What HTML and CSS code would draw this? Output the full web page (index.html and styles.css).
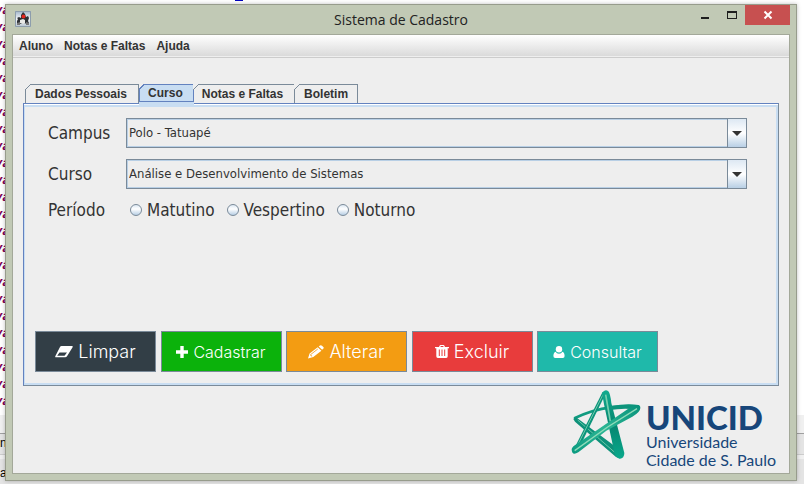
FILE: index.html
```html
<!DOCTYPE html>
<html lang="pt-BR">
<head>
<meta charset="utf-8">
<title>Sistema de Cadastro</title>
<link rel="stylesheet" href="styles.css">
</head>
<body>
<div class="backdrop" aria-hidden="true">
  <div class="editor">
    <div class="caret"></div>
    <div class="code">va<br>va<br>va<br>va<br>va<br>va<br>va<br>va<br>va<br>va<br>va<br>va<br>va<br>va<br>va<br>va<br>va<br>va<br>va<br>va<br>va<br>va<br>va<br>va</div>
  </div>
  <div class="strip"></div>
  <div class="strip-tabs">n</div>
  <div class="console">a</div>
</div>
<main class="window">
  <header class="titlebar">
    <svg class="app-icon" viewBox="0 0 16 16" width="16" height="16">
      <defs><linearGradient id="ic" x2="0" y2="1"><stop stop-color="#9fb3c8"/><stop offset=".5" stop-color="#f4f7fa"/><stop offset="1" stop-color="#b4c2cf"/></linearGradient></defs>
      <rect width="16" height="16" fill="url(#ic)"/>
      <path d="M.5.5h15v15H.5z" fill="none" stroke="#8d9dac"/>
      <path d="M8 1l2 2 1 3 2-1 1 2-1 3 1 2-2 1-3-1-4 1-3-1v-2l1-2-1-1 2-1 2 1 0-3z" fill="#2d3035"/>
      <path d="M5 9l3-1 2 1v3l-2 1-3-1z" fill="#e8e8e6"/>
      <path d="M2 12l3-1v3H2zM11 11l3 1v2h-3z" fill="#777"/>
      <circle cx="8.500" cy="5.500" r="2" fill="#e3241c"/>
    </svg>
    <h1>Sistema de Cadastro</h1>
    <div class="controls">
      <button type="button" aria-label="Minimizar"><svg width="10" height="10" viewBox="0 0 10 10"><path d="M1 7h8v2H1z" fill="#1e1e1e"/></svg></button>
      <button type="button" aria-label="Maximizar"><svg width="10" height="10" viewBox="0 0 10 10"><path d="M0 1h10v8H0zM1 3v5h8V3z" fill="#1e1e1e" fill-rule="evenodd"/></svg></button>
      <button type="button" class="close" aria-label="Fechar"><svg width="10" height="10" viewBox="0 0 10 10"><path d="M1.500 1.500l7 7M8.500 1.500l-7 7" stroke="#fff" stroke-width="2"/></svg></button>
    </div>
  </header>
  <div class="client">
    <nav class="menubar">
      <button type="button">Aluno</button>
      <button type="button">Notas e Faltas</button>
      <button type="button">Ajuda</button>
    </nav>
    <div class="tabs" role="tablist">
      <button type="button" role="tab" class="tab tab-personal">Dados Pessoais</button>
      <button type="button" role="tab" class="tab selected" aria-selected="true">Curso</button>
      <button type="button" role="tab" class="tab">Notas e Faltas</button>
      <button type="button" role="tab" class="tab tab-last">Boletim</button>
    </div>
    <form class="panel">
      <div class="field">
        <label for="campus">Campus</label>
        <div class="combo">
          <select id="campus"><option>Polo - Tatuapé</option></select>
          <span class="arrow"></span>
        </div>
      </div>
      <div class="field">
        <label for="curso">Curso</label>
        <div class="combo">
          <select id="curso"><option>Análise e Desenvolvimento de Sistemas</option></select>
          <span class="arrow"></span>
        </div>
      </div>
      <div class="field" role="radiogroup" aria-labelledby="periodo">
        <span class="label" id="periodo">Período</span>
        <div class="radios">
          <label><input type="radio" name="periodo">Matutino</label>
          <label><input type="radio" name="periodo">Vespertino</label>
          <label><input type="radio" name="periodo">Noturno</label>
        </div>
      </div>
      <div class="actions">
        <button type="button" class="clear large">
          <svg width="18" height="12" viewBox="0 0 18 12"><path d="M6.500 0H17q1.200 0 .6 1.200L12 10.300q-.6 1-1.800 1H1Q-.3 11.300.4 10L5 1Q5.500 0 6.500 0zM4.500 6.500L2.200 9.800h7.300L12 6.500z" fill="#fff" fill-rule="evenodd"/></svg>Limpar</button>
        <button type="button" class="add">
          <svg width="12" height="12" viewBox="0 0 12 12"><path d="M4.300 0h3.400v4.300H12v3.400H7.700V12H4.300V7.700H0V4.300h4.300z" fill="#fff"/></svg>Cadastrar</button>
        <button type="button" class="edit large">
          <svg width="16" height="14" viewBox="0 0 16 14"><path d="M0 13.500L1.600 8.600 9.700 2.200l3.700 3.600-8.100 6.300zM10.700 1.500L12 .5q1-.8 2 .2l1.300 1.200q1 1-.1 1.900l-1.100.9z" fill="#fff"/><path d="M3 9.300L9.800 4M2 9.700l.9.200.2 1 1 .2" stroke="#f39c12" stroke-width=".8" fill="none"/></svg>Alterar</button>
        <button type="button" class="delete large">
          <svg width="14" height="13" viewBox="0 0 14 13"><path d="M4 2l.7-1.500Q5 0 5.500 0h3q.5 0 .8.500L10 2h4v1.300h-1.300v8q0 1.700-1.500 1.700H2.800Q1.300 13 1.300 11.300v-8H0V2zm1.400 0h3.200L8.200 1H5.800z" fill="#fff" fill-rule="evenodd"/><path d="M4.300 4.500v6.500M7 4.500v6.500M9.700 4.500v6.500" stroke="#e83c3c" stroke-width="1"/></svg>Excluir</button>
        <button type="button" class="query">
          <svg width="12" height="12" viewBox="0 0 12 12"><path d="M2.600 5.800a3.700 3.300 0 0 0 6.800 0Q11.600 6.500 11.600 10q0 2-1.800 2H2.200Q.4 12 .4 10q0-3.500 2.200-4.200z" fill="#fff"/><circle cx="6" cy="3.200" r="3.200" fill="#fff"/></svg>Consultar</button>
      </div>
    </form>
    <footer class="brand">
      <svg class="star" width="70" height="72" viewBox="10 8 210 216">
        <defs>
          <linearGradient id="band" x1="0" y1="1" x2="1" y2="0"><stop stop-color="#0a9a80"/><stop offset=".5" stop-color="#2bb594"/><stop offset="1" stop-color="#07917a"/></linearGradient>
          <linearGradient id="leg" x2="0" y2="1"><stop stop-color="#12ab8e"/><stop offset=".5" stop-color="#078570"/><stop offset="1" stop-color="#09a88b"/></linearGradient>
        </defs>
        <path d="M22 95Q74 70 130 63Q180 54 212 60" fill="none" stroke="#119b80" stroke-width="8" stroke-linecap="round"/>
        <path d="M120 60Q175 52 214 57L205 70Q170 64 122 72z" fill="#0d947b"/>
        <path d="M17 98L25 93L150 186L160 215Q148 218 138 206L22 106z" fill="#0e917a"/>
        <path d="M30 101L140 197" stroke="#6cc8a8" stroke-width="3"/>
        <path d="M105 16L110 30L36 182L16 194z" fill="#0b947b"/>
        <path d="M106 25L26 184" stroke="#70c8aa" stroke-width="3"/>
        <path d="M103 20Q112 7 122 15Q128 22 131 50L170 200Q170 217 156 217Q144 216 140 198L109 54z" fill="url(#leg)"/>
        <path d="M114 25L128 105" stroke="#77cfae" stroke-width="5"/>
        <path d="M12 188Q13 181 28 172L184 66Q205 50 217 60Q223 74 194 91L116 133L32 198Q12 210 12 188z" fill="url(#band)"/>
        <path d="M21 193L120 122L208 67" fill="none" stroke="#8fdcba" stroke-width="4"/>
      </svg>
      <div class="brand-text">
        <strong>UNICID</strong>
        <span>Universidade</span>
        <span>Cidade de S. Paulo</span>
      </div>
    </footer>
  </div>
</main>
</body>
</html>
```
FILE: styles.css
```css
* { box-sizing: border-box; }

body {
  margin: 0;
  min-height: 100vh;
  display: flex;
  padding: 4px 7px 3px 5px;
  background: #fff;
  color: #333;
  font-family: "DejaVu Sans Condensed", "Liberation Sans", sans-serif;
}

button { font: inherit; color: inherit; border: 0; padding: 0; background: none; }

/* Desktop behind the window */
.backdrop {
  position: absolute;
  inset: 0;
  display: flex;
  flex-direction: column;
  overflow: hidden;
  color: #000;
  font: 12px/18px "Liberation Sans", sans-serif;
}
.editor { flex: 1; min-height: 0; overflow: hidden; position: relative; }
.caret { position: absolute; left: 235px; top: 0; width: 8px; height: 1px; background: #0000c0; }
.code {
  width: 10px;
  padding-top: 2px;
  direction: rtl;
  color: #7f0055;
  font: italic bold 13px/17px "Liberation Mono", monospace;
}
.strip { height: 18px; background: #f0f0f0; }
.strip-tabs { height: 22px; border-top: 1px solid #a0a0a0; background: #e4e4e4; border-bottom: 1px solid #ccc; }
.console { height: 29px; padding-top: 5px; background: #e4e4e4; border-top: 4px solid #f0f0f0; }

.window {
  position: relative;
  flex: 1;
  display: flex;
  flex-direction: column;
  padding: 0 6px 6px;
  border: 1px solid #979c8c;
  background: #c1c9b5;
  box-shadow: 0 0 4px rgba(0, 0, 0, .25);
}

.titlebar { display: grid; grid-template-columns: 1fr auto 1fr; height: 29px; }
.app-icon { margin: 6px 0 0 3px; }
.titlebar h1 { margin: 0; font: 14px/29px "Open Sans", sans-serif; color: #222; }
.controls { display: flex; justify-content: flex-end; align-items: flex-start; }
.controls button { display: grid; place-items: center; width: 27px; height: 20px; }
.controls .close { width: 45px; background: #c75050; }

.client {
  flex: 1;
  display: flex;
  flex-direction: column;
  border: 1px solid #a3a899;
  background: #eee;
}

.menubar {
  display: flex;
  gap: 11px;
  height: 23px;
  padding: 0 6px;
  border-bottom: 1px solid #ccc;
  background: linear-gradient(#fff, #dadada 21px, #eee 21px);
  font: bold 12px/22px "Liberation Sans", sans-serif;
}

.tabs {
  display: flex;
  margin: 26px 10px 0 12px;
  font: bold 12px/18px "Liberation Sans", sans-serif;
}
.tab {
  position: relative;
  height: 19px;
  padding: 0 11px 0 8px;
  border: solid #7a8a99;
  border-width: 1px 1px 0 0;
  background: #eee;
}
.tab::before {
  content: "";
  position: absolute;
  left: -1px;
  top: -1px;
  width: 6px;
  height: 6px;
  background: linear-gradient(135deg, #eee 42%, #7a8a99 42%, #7a8a99 56%, transparent 56%);
}
.tab-personal { padding-left: 9px; border-left-width: 1px; }
.tab-last { padding: 0 9px; }
.tab.selected {
  height: 18px;
  line-height: 17px;
  padding-right: 10px;
  border: 1px solid #6382bf;
  background: #c8ddf2;
}
.tab.selected::before {
  background: linear-gradient(135deg, #eee 38%, #6382bf 38%, #6382bf 56%, transparent 56%);
}
.tab.selected::after {
  content: "";
  position: absolute;
  left: -1px;
  right: -1px;
  top: 17px;
  height: 5px;
  background: #c8ddf2;
}

.panel {
  display: flex;
  flex-direction: column;
  min-height: 283px;
  margin: 0 10px;
  padding: 14px 31px 13px 11px;
  border: 1px solid #6382bf;
  border-right-color: #7a8a99;
  border-bottom-color: #7a8a99;
  box-shadow: inset 0 1px #fff, inset 1px 3px #c8ddf2, inset -2px -2px #c8ddf2;
}

.field { display: flex; align-items: center; margin: 0 0 11px 13px; font-size: 17px; line-height: 20px; }
.field > label, .label { flex: none; width: 78px; }
.combo { position: relative; flex: 1; display: flex; }
.combo select {
  flex: 1;
  min-width: 0;
  height: 30px;
  padding: 0 22px 0 2px;
  appearance: none;
  border: 1px solid #7a8a99;
  border-radius: 0;
  background: #eee;
  box-shadow: inset 0 0 0 1px #b8cfe5;
  color: #333;
  font: 13px/20px "DejaVu Sans Condensed", sans-serif;
}
.arrow {
  position: absolute;
  inset: 1px 1px 1px auto;
  width: 19px;
  display: grid;
  place-items: center;
  border-left: 1px solid #7a8a99;
  background: linear-gradient(#dde8f3, #fff 50%, #b8cfe5);
  pointer-events: none;
}
.arrow::after { content: ""; border: 5px solid transparent; border-top-color: #333; border-bottom: 0; }

.radios { display: flex; gap: 12px; padding-left: 4px; }
.radios label { display: flex; align-items: center; gap: 5px; }
.radios input {
  appearance: none;
  width: 12px;
  height: 12px;
  margin: 0;
  border: 1px solid #7a8a99;
  border-radius: 50%;
  background: linear-gradient(#dde8f3, #fff 40%, #b8cfe5);
}

.actions { display: flex; justify-content: space-between; width: 100%; max-width: 623px; margin: auto 0 0; }
.actions button {
  display: flex;
  align-items: center;
  justify-content: center;
  gap: 5px;
  width: 121px;
  height: 41px;
  border: 1px solid #7a8a99;
  color: #fff;
  font: 300 16px/20px "Inter", sans-serif;
}
.actions .large { font-size: 18px; }
.actions .clear { background: #323e46; }
.actions .add { background: #0bb20b; }
.actions .edit { background: #f39c12; }
.actions .delete { background: #e83c3c; }
.actions .query { background: #1fb9aa; }

.brand { display: flex; justify-content: flex-end; gap: 5px; padding: 3px 13px 0 0; color: #17467a; }
.brand-text { display: flex; flex-direction: column; font: 16px/18px Lato, sans-serif; }
.brand-text strong { margin-top: 12px; font: 900 33px/32px Lato, sans-serif; }
```
